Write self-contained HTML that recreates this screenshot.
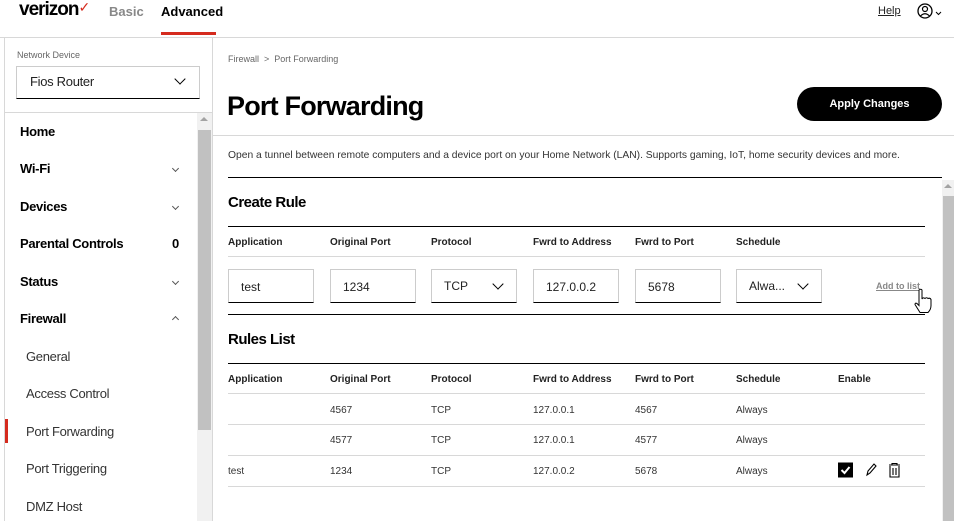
<!DOCTYPE html>
<html><head><meta charset="utf-8"><style>
*{margin:0;padding:0;box-sizing:border-box}
body{width:954px;height:521px;overflow:hidden;background:#fff;font-family:"Liberation Sans",Arial,sans-serif;color:#000;position:relative}
.a{position:absolute;white-space:nowrap}
.b{font-weight:bold}
.hl{position:absolute;height:1px;background:#d8d8d8}
.bl{position:absolute;height:1px;background:#000}
.inp{position:absolute;top:269px;width:86px;height:34px;border:1px solid #ccc;border-bottom:1px solid #000;font-size:12px;padding:10px 0 0 12px;color:#222}
.chev{position:absolute;width:8px;height:8px;border-right:1.5px solid #000;border-bottom:1.5px solid #000;transform:rotate(45deg)}
.nav{position:absolute;left:20px;font-size:13px;font-weight:bold;letter-spacing:-0.3px}
.sub{position:absolute;left:26px;font-size:13px;color:#333;letter-spacing:-0.3px}
.sc{position:absolute;left:173px;width:5px;height:5px;border-right:1px solid #555;border-bottom:1px solid #555;transform:rotate(45deg)}
.th{position:absolute;font-size:10px;font-weight:bold;color:#222}
.td{position:absolute;font-size:10px;color:#333}
</style></head><body>
<div class="a b" style="left:19px;top:-1px;font-size:19px;letter-spacing:-1px">verizon<span style="color:#d52b1e;font-weight:normal;font-size:14px;vertical-align:top">✓</span></div>
<div class="a b" style="left:109px;top:4px;font-size:13px;color:#888">Basic</div>
<div class="a b" style="left:161px;top:4px;font-size:13px">Advanced</div>
<div class="a" style="left:161px;top:32px;width:55px;height:3px;background:#d52b1e"></div>
<div class="a" style="left:878px;top:5px;font-size:11px;text-decoration:underline;color:#222">Help</div>
<svg class="a" style="left:917px;top:3px" width="26" height="17"><circle cx="8" cy="8" r="7" fill="none" stroke="#000" stroke-width="1.3"/><circle cx="8" cy="6" r="2.5" fill="none" stroke="#000" stroke-width="1.2"/><path d="M3.5 13 Q8 8.5 12.5 13" fill="none" stroke="#000" stroke-width="1.2"/><path d="M19 9 l2.5 2.5 l2.5 -2.5" fill="none" stroke="#000" stroke-width="1"/></svg>
<div class="hl" style="left:0;top:37px;width:954px"></div>
<div class="a" style="left:4px;top:37px;width:1px;height:484px;background:#d8d8d8"></div>
<div class="a" style="left:212px;top:37px;width:1px;height:484px;background:#d8d8d8"></div>
<div class="a" style="left:17px;top:50px;font-size:9px;color:#666">Network Device</div>
<div class="a" style="left:16px;top:66px;width:184px;height:33px;border:1px solid #ccc;border-bottom:1px solid #000"></div>
<div class="a" style="left:30px;top:74px;font-size:13px;color:#222;letter-spacing:-0.3px">Fios Router</div>
<div class="chev" style="left:176px;top:75px"></div>
<div class="hl" style="left:4px;top:112px;width:208px"></div>
<div class="a" style="left:197px;top:113px;width:15px;height:408px;background:#f1f1f1"></div>
<div class="a" style="left:198px;top:130px;width:13px;height:300px;background:#c1c1c1"></div>
<div class="a" style="left:200px;top:117px;border-left:4px solid transparent;border-right:4px solid transparent;border-bottom:4px solid #a3a3a3"></div>
<div class="nav" style="top:124px">Home</div>
<div class="nav" style="top:161px">Wi-Fi</div><div class="sc" style="top:166px"></div>
<div class="nav" style="top:199px">Devices</div><div class="sc" style="top:204px"></div>
<div class="nav" style="top:236px">Parental Controls</div><div class="a b" style="left:172px;top:236px;font-size:13px">0</div>
<div class="nav" style="top:274px">Status</div><div class="sc" style="top:279px"></div>
<div class="nav" style="top:311px">Firewall</div><div class="sc" style="top:317px;transform:rotate(225deg)"></div>
<div class="sub" style="top:349px">General</div>
<div class="sub" style="top:386px">Access Control</div>
<div class="a" style="left:5px;top:419px;width:3px;height:24px;background:#d52b1e"></div>
<div class="sub" style="top:424px">Port Forwarding</div>
<div class="sub" style="top:461px">Port Triggering</div>
<div class="sub" style="top:499px">DMZ Host</div>
<div class="a" style="left:228px;top:54px;font-size:9px;color:#666">Firewall &nbsp;&gt;&nbsp; Port Forwarding</div>
<div class="a b" style="left:227px;top:91px;font-size:27px;letter-spacing:-0.8px">Port Forwarding</div>
<div class="a b" style="left:797px;top:87px;width:145px;height:34px;border-radius:17px;background:#000;color:#fff;font-size:11px;text-align:center;line-height:34px">Apply Changes</div>
<div class="hl" style="left:213px;top:135px;width:741px"></div>
<div class="a" style="left:228px;top:150px;font-size:10.3px;color:#333">Open a tunnel between remote computers and a device port on your Home Network (LAN). Supports gaming, IoT, home security devices and more.</div>
<div class="bl" style="left:228px;top:177px;width:714px"></div>
<div class="a" style="left:942px;top:180px;width:12px;height:341px;background:#f1f1f1"></div>
<div class="a" style="left:943px;top:196px;width:11px;height:325px;background:#c1c1c1"></div>
<div class="a" style="left:944px;top:184px;border-left:4px solid transparent;border-right:4px solid transparent;border-bottom:4px solid #a3a3a3"></div>
<div class="a b" style="left:228px;top:194px;font-size:15px;letter-spacing:-0.5px">Create Rule</div>
<div class="bl" style="left:228px;top:226px;width:697px"></div>
<div class="th" style="left:228px;top:237px">Application</div><div class="th" style="left:330px;top:237px">Original Port</div><div class="th" style="left:431px;top:237px">Protocol</div><div class="th" style="left:533px;top:237px">Fwrd to Address</div><div class="th" style="left:635px;top:237px">Fwrd to Port</div><div class="th" style="left:736px;top:237px">Schedule</div>
<div class="hl" style="left:228px;top:256px;width:697px"></div>
<div class="inp" style="left:228px">test</div>
<div class="inp" style="left:330px">1234</div>
<div class="inp" style="left:431px;padding-top:9px">TCP</div><div class="chev" style="left:494px;top:280px"></div>
<div class="inp" style="left:533px">127.0.0.2</div>
<div class="inp" style="left:635px">5678</div>
<div class="inp" style="left:736px;padding-top:9px">Alwa...</div><div class="chev" style="left:799px;top:280px"></div>
<div class="a b" style="left:876px;top:281px;font-size:9px;color:#888;text-decoration:underline">Add to list</div>
<div class="bl" style="left:228px;top:314px;width:697px"></div>
<div class="a b" style="left:228px;top:331px;font-size:15px;letter-spacing:-0.5px">Rules List</div>
<div class="bl" style="left:228px;top:363px;width:697px"></div>
<div class="th" style="left:228px;top:374px">Application</div><div class="th" style="left:330px;top:374px">Original Port</div><div class="th" style="left:431px;top:374px">Protocol</div><div class="th" style="left:533px;top:374px">Fwrd to Address</div><div class="th" style="left:635px;top:374px">Fwrd to Port</div><div class="th" style="left:736px;top:374px">Schedule</div><div class="th" style="left:838px;top:374px">Enable</div>
<div class="hl" style="left:228px;top:393px;width:697px"></div>
<div class="td" style="left:330px;top:405px">4567</div><div class="td" style="left:431px;top:405px">TCP</div><div class="td" style="left:533px;top:405px">127.0.0.1</div><div class="td" style="left:635px;top:405px">4567</div><div class="td" style="left:736px;top:405px">Always</div>
<div class="hl" style="left:228px;top:424px;width:697px"></div>
<div class="td" style="left:330px;top:435px">4577</div><div class="td" style="left:431px;top:435px">TCP</div><div class="td" style="left:533px;top:435px">127.0.0.1</div><div class="td" style="left:635px;top:435px">4577</div><div class="td" style="left:736px;top:435px">Always</div>
<div class="hl" style="left:228px;top:455px;width:697px"></div>
<div class="td" style="left:228px;top:466px">test</div><div class="td" style="left:330px;top:466px">1234</div><div class="td" style="left:431px;top:466px">TCP</div><div class="td" style="left:533px;top:466px">127.0.0.2</div><div class="td" style="left:635px;top:466px">5678</div><div class="td" style="left:736px;top:466px">Always</div>
<svg class="a" style="left:838px;top:462px" width="64" height="16"><rect x="0" y="0.5" width="15" height="15" fill="#000"/><path d="M3.5 8 l3 3 l5 -6" fill="none" stroke="#fff" stroke-width="2"/><path d="M29 13 l1 -4 l6 -7 l2 2 l-6 7 z" fill="none" stroke="#000" stroke-width="1.1"/><path d="M51 3 h11 M54 3 v-1.5 h5 v1.5 M52 4 v11 h9 v-11 M55 6 v7 M58 6 v7" fill="none" stroke="#000" stroke-width="1.1"/></svg>
<div class="hl" style="left:228px;top:486px;width:697px"></div>
<svg class="a" style="left:912px;top:288px" width="22" height="26"><path d="M7 2 q2 -1.5 3 0 v9 q1 -2 3 -0.5 q1.5 -1.5 3 0 q2 -1 3 1 v6 q0 4 -3 7 h-8 l-5 -8 q0 -2 2 -1 l2 2 z" fill="#fff" stroke="#000" stroke-width="1"/></svg>
</body></html>
